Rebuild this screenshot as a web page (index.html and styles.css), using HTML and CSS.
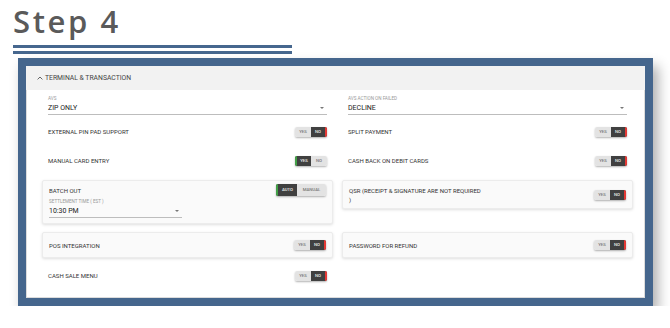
FILE: index.html
```html
<!DOCTYPE html>
<html lang="en">
<head>
    <title>Step 4</title>
    <link rel="stylesheet" href="styles.css">
</head>
<body>
    <h1 class="title">Step 4</h1>
    <div class="rule"></div>

    <div class="frame">
        <div class="panel">
            <div class="head">
                <svg width="6" height="4" viewBox="0 0 6 4"><polyline points="0.6,3.4 3,1 5.4,3.4" fill="none" stroke="#555" stroke-width="0.9"/></svg>
                TERMINAL &amp; TRANSACTION
            </div>

            <div class="grid">
                <!-- selects -->
                <div class="sel">
                    <div class="sl">AVS</div>
                    <div class="sv">ZIP ONLY<i class="arr"></i></div>
                </div>
                <div class="sel">
                    <div class="sl">AVS ACTION ON FAILED</div>
                    <div class="sv">DECLINE<i class="arr"></i></div>
                </div>

                <!-- plain rows -->
                <div class="row"><span>EXTERNAL PIN PAD SUPPORT</span>
                    <div class="tg"><span>YES</span><span class="on no">NO</span></div></div>
                <div class="row"><span>SPLIT PAYMENT</span>
                    <div class="tg"><span>YES</span><span class="on no">NO</span></div></div>

                <div class="row"><span>MANUAL CARD ENTRY</span>
                    <div class="tg"><span class="on yes">YES</span><span>NO</span></div></div>
                <div class="row"><span>CASH BACK ON DEBIT CARDS</span>
                    <div class="tg"><span>YES</span><span class="on no">NO</span></div></div>

                <!-- cards -->
                <div class="card batch">
                    <div class="bt">
                        <span>BATCH OUT</span>
                        <div class="tg big"><span class="on yes">AUTO</span><span class="man">MANUAL</span></div>
                    </div>
                    <div class="sel small">
                        <div class="sl">SETTLEMENT TIME ( EST )</div>
                        <div class="sv">10:30 PM<i class="arr"></i></div>
                    </div>
                </div>
                <div class="card qsr">
                    <span class="ql">QSR (RECEIPT &amp; SIGNATURE ARE NOT REQUIRED<br>)</span>
                    <div class="tg"><span>YES</span><span class="on no">NO</span></div>
                </div>

                <div class="card flat"><span>POS INTEGRATION</span>
                    <div class="tg"><span>YES</span><span class="on no">NO</span></div></div>
                <div class="card flat"><span>PASSWORD FOR REFUND</span>
                    <div class="tg"><span>YES</span><span class="on no">NO</span></div></div>

                <div class="row"><span>CASH SALE MENU</span>
                    <div class="tg"><span>YES</span><span class="on no">NO</span></div></div>
            </div>
        </div>
    </div>
</body>
</html>
```

FILE: styles.css
```css
body {
    margin: 0;
    background: #fff;
    font-family: Roboto, "Liberation Sans", sans-serif;
    color: #333;
}
.title {
    margin: 0;
    padding: 6px 0 0 13px;
    font-family: "Open Sans", "DejaVu Sans", sans-serif;
    font-weight: 600;
    font-size: 31px;
    line-height: 30px;
    letter-spacing: 2.6px;
    color: #5a5a5a;
}
.rule {
    width: 279px;
    height: 3px;
    margin: 9px 0 0 13px;
    border-top: 3px solid #46678e;
    border-bottom: 3px solid #46678e;
}

/* blue frame round the screenshot */
.frame {
    width: 619px;
    height: 232px;
    margin: 4px 0 0 18px;
    border: 8px solid #45668d;
    box-shadow: 5px 8px 12px rgba(0, 0, 0, 0.32);
}
.panel {
    height: 100%;
    background: #fff;
    box-shadow: inset 0 0 0 1px #dcdcdc;
}
.head {
    height: 24px;
    display: flex;
    align-items: center;
    gap: 2px;
    padding-left: 11px;
    background: #f2f2f2;
    font-size: 6.8px;
    color: #444;
}

.grid {
    display: grid;
    grid-template-columns: 291px 291px;
    column-gap: 9px;
    row-gap: 4px;
    align-items: start;
    padding: 6px 12px 0 16px;
}

/* select fields */
.sel { margin: 0 6px; height: 19px; }
.sl {
    font-size: 4.6px;
    line-height: 6px;
    color: #999;
}
.sv {
    display: flex;
    justify-content: space-between;
    align-items: center;
    height: 12px;
    padding-right: 3px;
    border-bottom: 1px solid #bdbdbd;
    font-size: 7px;
    color: #222;
}
.arr {
    border-left: 2.5px solid transparent;
    border-right: 2.5px solid transparent;
    border-top: 2.5px solid #777;
}

.row, .card {
    display: flex;
    justify-content: space-between;
    align-items: center;
    font-size: 6px;
}
.row { height: 25px; padding: 0 6px; }
.card {
    margin: 3px 0 1px;
    padding: 0 6px;
    background: #fafafa;
    border: 1px solid #ececec;
    border-radius: 2px;
    box-shadow: 0 1px 3px rgba(0, 0, 0, 0.13);
}
.flat { height: 24px; }
.qsr { padding: 5px 6px 4px; }
.ql { line-height: 9px; }

.batch {
    display: block;
    padding: 3px 6px 5px;
}
.bt {
    display: flex;
    justify-content: space-between;
    align-items: center;
    height: 12px;
    margin-bottom: 3px;
}
.small { width: 133px; margin: 0; }

/* yes / no switch */
.tg {
    display: flex;
    height: 10px;
    border-radius: 2px;
    overflow: hidden;
    box-shadow: 0 1px 2px rgba(0, 0, 0, 0.3);
    font-size: 4.3px;
    font-weight: 500;
}
.tg span {
    box-sizing: border-box;
    width: 16px;
    line-height: 10px;
    text-align: center;
    background: #e3e3e3;
    color: #777;
}
.tg .on {
    background: #404040;
    color: #eee;
}
.tg .no { border-right: 2px solid #e53935; }
.tg .yes { border-left: 2px solid #43a047; }
.big { height: 12px; }
.big span { line-height: 12px; width: 21px; }
.big .man { width: 29px; }
```
